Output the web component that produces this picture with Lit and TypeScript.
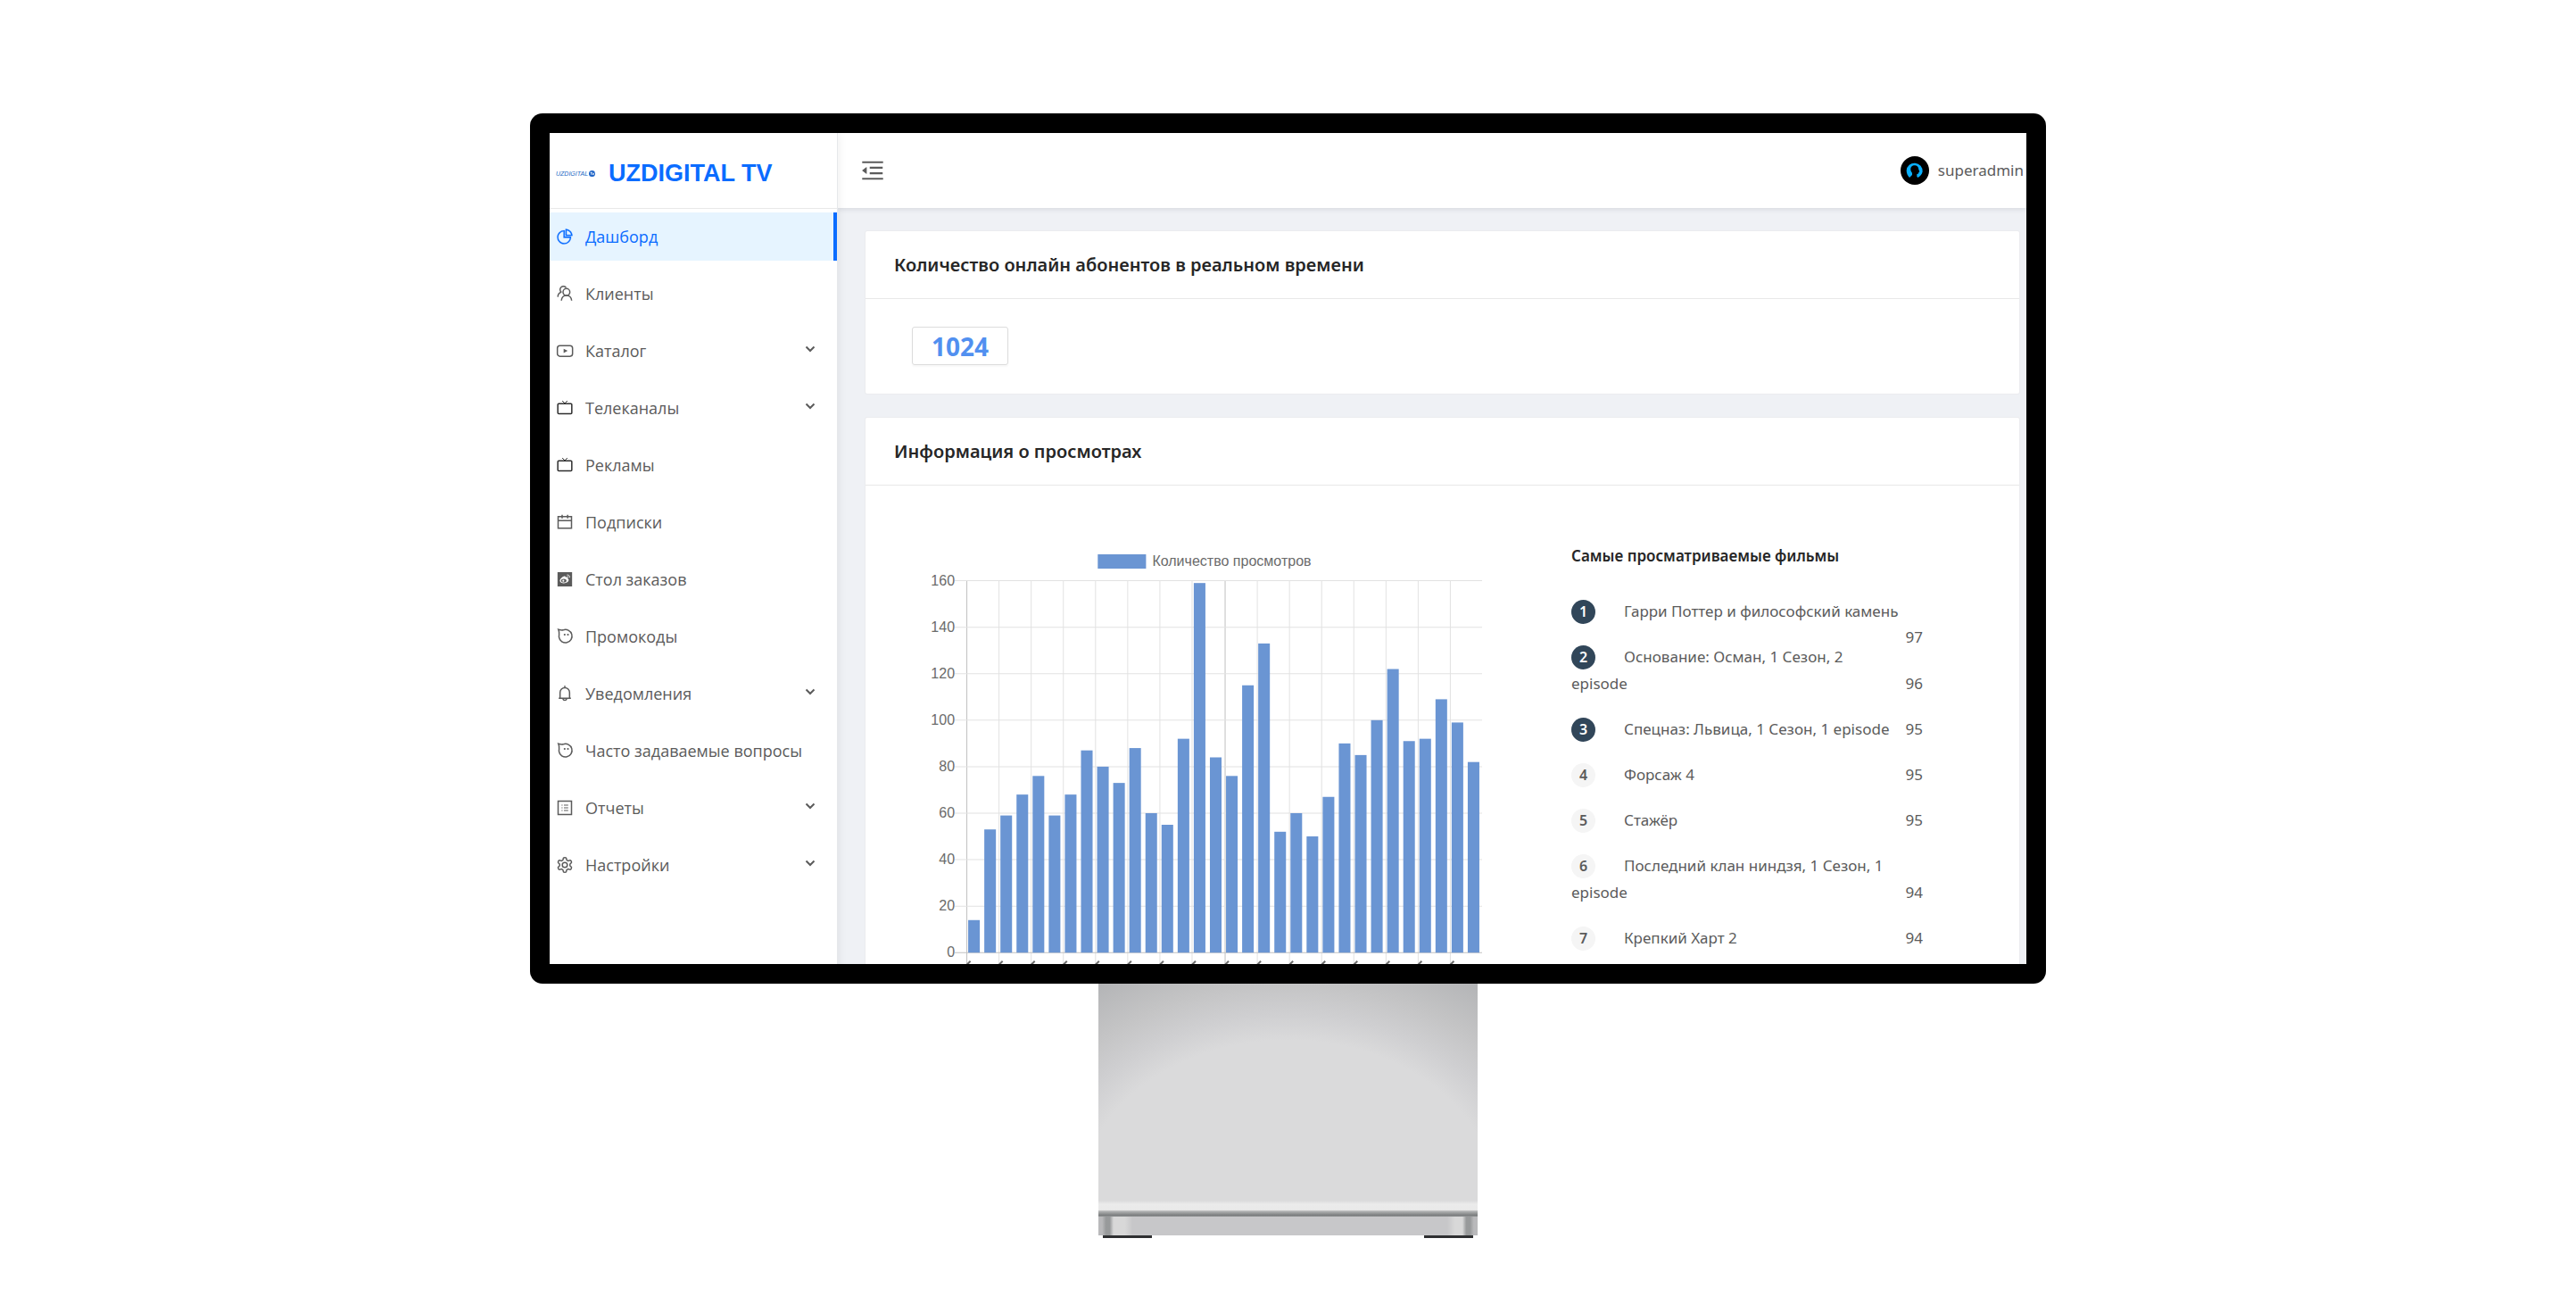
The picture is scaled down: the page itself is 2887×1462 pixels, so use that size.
import { LitElement, html, svg, css } from "lit";
import { customElement, property } from "lit/decorators.js";

const ICONS: Record<string, unknown> = {
  pie: svg`<g transform="scale(0.0234375)"><path fill="currentColor" stroke="currentColor" stroke-width="12" d="M864 518H506V160c0-4.400-3.600-8-8-8h-26a398.460 398.460 0 0 0-282.800 117.100 398.190 398.190 0 0 0-85.700 127.100A397.610 397.610 0 0 0 72 552a398.460 398.460 0 0 0 117.100 282.800c36.700 36.700 79.500 65.600 127.100 85.700A397.610 397.610 0 0 0 472 952a398.460 398.460 0 0 0 282.800-117.100c36.700-36.700 65.600-79.500 85.700-127.100A397.610 397.610 0 0 0 872 552v-26c0-4.400-3.600-8-8-8zM705.700 787.800A331.590 331.590 0 0 1 470.400 884c-88.100-.4-170.900-34.900-233.200-97.200C174.500 724.100 140 640.700 140 552c0-88.700 34.500-172.100 97.200-234.800 54.600-54.600 124.900-87.900 200.800-95.500V586h364.300c-7.700 76.300-41.300 147-96.600 201.800zM952 462.400l-2.600-28.200c-8.500-92.100-49.400-179-115.200-244.600A399.400 399.400 0 0 0 589 74.600L560.700 72c-4.700-.4-8.700 3.200-8.700 7.900V464c0 4.400 3.600 8 8 8l384-1c4.700 0 8.400-4 8-8.600zm-332.200-58.200V147.600a332.240 332.240 0 0 1 166.400 89.800c45.700 45.600 77 103.600 90 166.100l-256.400.7z"/></g>`,
  clients: svg`<circle cx="14.200" cy="9.800" r="4.600"/><path d="M7.400 21.400c.2-4.200 3-7 6.800-7s6.800 2.800 7 7"/><path d="M13.800 4A4.500 4.500 0 1 0 7.200 10"/><path d="M2.600 16.400c.2-3.400 2-5.800 5-6.400"/>`,
  video: svg`<rect x="2" y="5" width="20.400" height="14.400" rx="3.400"/><path fill="currentColor" stroke="none" d="M10.400 9.200v5.800l5.400-2.900z"/>`,
  tv: svg`<g stroke="#2e2e2e"><rect x="2.600" y="6.400" width="18.800" height="13.400" rx="1.200"/><path stroke-width="1.200" d="M8.600 2.400 12 6l3.400-3.600"/></g>`,
  calendar: svg`<path d="M3 4.600h18v15.600H3zM3 10h18M8.400 2v5M15.800 2v5"/>`,
  weibo: svg`<path fill="currentColor" stroke="none" d="M2.200 2.400h19.600v19.200H2.200z"/><path fill="#fff" stroke="none" d="M10.600 8c1.400-.6 2.600-.2 2.400 1.200 2-.6 3.400 0 2.800 1.600 1.600.8 2 2.400.8 4-2.600 3.400-10.600 3.400-11.200-.6-.2-2.400 2.800-5.400 5.200-6.200z"/><ellipse cx="10.600" cy="13.800" rx="3.600" ry="2.500" fill="currentColor" stroke="none"/><circle cx="10" cy="14" r="1.300" fill="#fff" stroke="none"/><path stroke="#fff" stroke-width="1" d="M14.800 6.200c2.600-.6 4.200 1.400 3.600 3.600M15.200 8.200c1-.2 1.600.4 1.400 1.400"/>`,
  face: svg`<path d="M3.400 2.600C5.600 3.400 7.400 4 9.800 3.400a8.800 8.800 0 1 1-5.600 9.600C3.800 9.800 5.600 8 3.400 2.600z"/><g fill="currentColor" stroke="none"><circle cx="11.800" cy="9.600" r="1.300"/><circle cx="16.200" cy="9.600" r="1.300"/></g>`,
  bell: svg`<path d="M5.600 18.200V10.600a6.400 6.400 0 0 1 12.800 0v7.600M3.800 18.400h16.400M9.400 19a2.700 2.700 0 0 0 5.200 0M12 1.400v2.800"/>`,
  report: svg`<path d="M3 3h18v18H3z"/><path stroke-width="1.400" d="M10.800 8.400h5.800M10.800 12h5.800M10.800 15.600h5.800M7.600 8.400h1.400M7.600 12h1.400M7.600 15.600h1.400"/>`,
  gear: svg`<path d="M12.220 2h-.44a2 2 0 0 0-2 2v.18a2 2 0 0 1-1 1.730l-.43.25a2 2 0 0 1-2 0l-.15-.08a2 2 0 0 0-2.730.73l-.22.38a2 2 0 0 0 .73 2.730l.15.1a2 2 0 0 1 1 1.720v.51a2 2 0 0 1-1 1.740l-.15.09a2 2 0 0 0-.73 2.730l.22.38a2 2 0 0 0 2.730.73l.15-.08a2 2 0 0 1 2 0l.43.25a2 2 0 0 1 1 1.730V20a2 2 0 0 0 2 2h.44a2 2 0 0 0 2-2v-.18a2 2 0 0 1 1-1.730l.43-.25a2 2 0 0 1 2 0l.15.08a2 2 0 0 0 2.730-.73l.22-.39a2 2 0 0 0-.73-2.730l-.15-.08a2 2 0 0 1-1-1.740v-.5a2 2 0 0 1 1-1.740l.15-.09a2 2 0 0 0 .73-2.730l-.22-.38a2 2 0 0 0-2.730-.73l-.15.08a2 2 0 0 1-2 0l-.43-.25a2 2 0 0 1-1-1.730V4a2 2 0 0 0-2-2z"/><circle cx="12" cy="12" r="3.400"/>`,
};

interface MenuEntry {
  icon: string;
  label: string;
  group?: boolean;
  active?: boolean;
}

const MENU: MenuEntry[] = [
  { icon: "pie", label: "Дашборд", active: true },
  { icon: "clients", label: "Клиенты" },
  { icon: "video", label: "Каталог", group: true },
  { icon: "tv", label: "Телеканалы", group: true },
  { icon: "tv", label: "Рекламы" },
  { icon: "calendar", label: "Подписки" },
  { icon: "weibo", label: "Стол заказов" },
  { icon: "face", label: "Промокоды" },
  { icon: "bell", label: "Уведомления", group: true },
  { icon: "face", label: "Часто задаваемые вопросы" },
  { icon: "report", label: "Отчеты", group: true },
  { icon: "gear", label: "Настройки", group: true },
];

const VIEWS = [
  14, 53, 59, 68, 76, 59, 68, 87, 80, 73, 88, 60, 55, 92, 159, 84, 76, 115, 133,
  52, 60, 50, 67, 90, 85, 100, 122, 91, 92, 109, 99, 82,
];

interface Film {
  lines: string[];
  views: number;
  spill?: boolean;
}

const FILMS: Film[] = [
  { lines: ["Гарри Поттер и философский камень"], views: 97, spill: true },
  { lines: ["Основание: Осман, 1 Сезон, 2", "episode"], views: 96 },
  { lines: ["Спецназ: Львица, 1 Сезон, 1 episode"], views: 95 },
  { lines: ["Форсаж 4"], views: 95 },
  { lines: ["Стажёр"], views: 95 },
  { lines: ["Последний клан ниндзя, 1 Сезон, 1", "episode"], views: 94 },
  { lines: ["Крепкий Харт 2"], views: 94 },
];

@customElement("side-menu")
class SideMenu extends LitElement {
  static styles = css`
    :host {
      display: block;
    }
    .list {
      list-style: none;
      margin: 0;
      padding: 4px 0 0;
      display: flex;
      flex-direction: column;
      gap: 10px;
    }
    .item {
      box-sizing: border-box;
      width: 100%;
      height: 54px;
      display: flex;
      align-items: center;
      gap: 13px;
      padding: 0 24px 0 7px;
      border: 0;
      border-right: 4px solid transparent;
      background: none;
      color: #5b5b5b;
      font: inherit;
      text-align: left;
      text-decoration: none;
      white-space: nowrap;
      cursor: pointer;
    }
    .active {
      background: #e6f4ff;
      color: #0a6cff;
      border-right-color: #0a6cff;
    }
    .group {
      border-right: 0;
    }
    .icon {
      flex: none;
      width: 20px;
      height: 20px;
      fill: none;
      stroke: currentColor;
      stroke-width: 1.8;
    }
    .chevron {
      flex: none;
      width: 12px;
      height: 8px;
      margin: 0 0 4px auto;
      fill: none;
      stroke: currentColor;
      stroke-width: 2;
    }
  `;

  render() {
    return html`<ul class="list">
      ${MENU.map((m) => {
        const icon = html`<svg class="icon" viewBox="0 0 24 24" aria-hidden="true">${ICONS[m.icon]}</svg>`;
        return html`<li>
          ${m.group
            ? html`<button class="item group" type="button" aria-expanded="false">
                ${icon}<span>${m.label}</span>
                <svg class="chevron" viewBox="0 0 12 8" aria-hidden="true"><path d="M1.500 1.500 6 6l4.500-4.500" /></svg>
              </button>`
            : html`<a class="item ${m.active ? "active" : ""}" href="#">${icon}<span>${m.label}</span></a>`}
        </li>`;
      })}
    </ul>`;
  }
}

@customElement("views-chart")
class ViewsChart extends LitElement {
  @property({ attribute: false }) values: number[] = [];

  static styles = css`
    :host {
      display: block;
    }
    .chart {
      display: block;
      width: 100%;
      overflow: visible;
      font: 16px "Liberation Sans", Arial, sans-serif;
      fill: #6b6b6b;
    }
    .bar {
      fill: #6a95d3;
    }
    .grid {
      stroke: #e2e2e2;
    }
    .axis {
      stroke: #c0c0c0;
    }
    .tip {
      stroke: #6b6b6b;
      stroke-width: 2;
    }
    .num {
      text-anchor: end;
    }
  `;

  render() {
    const left = 43;
    const right = 620;
    const top = 42;
    const bottom = 458;
    const step = (right - left) / this.values.length;
    const unit = (bottom - top) / 160;
    const ticks = [0, 20, 40, 60, 80, 100, 120, 140, 160];
    const columns = this.values.map((_, i) => i).filter((i) => i % 2 === 0);
    return html`<svg class="chart" viewBox="0 0 624 480" role="img" aria-label="Количество просмотров">
      <rect class="bar" x="190" y="13" width="54" height="16" />
      <text x="251" y="26">Количество просмотров</text>
      ${columns.map((i) => {
        const x = Math.round(left + i * step) + 0.5;
        return svg`<line class=${i === 0 || i === 16 ? "axis" : "grid"} x1=${x} x2=${x} y1=${top} y2=${bottom + 14}></line>
          <line class="tip" x1=${x} x2=${x + 4} y1=${bottom + 14} y2=${bottom + 10}></line>`;
      })}
      ${ticks.map((t) => {
        const y = Math.round(bottom - t * unit) + 0.5;
        return svg`<line class=${t === 0 ? "axis" : "grid"} x1=${left - 13} x2=${right} y1=${y} y2=${y}></line>
          <text class="num" x=${left - 13} y=${y + 5}>${t}</text>`;
      })}
      ${this.values.map(
        (v, i) => svg`<rect class="bar" x=${left + i * step + 2} y=${bottom + 0.5 - v * unit} width="13" height=${v * unit}></rect>`,
      )}
    </svg>`;
  }
}

@customElement("film-list")
class FilmList extends LitElement {
  static styles = css`
    :host {
      display: block;
      color: #5b5b5b;
      font-family: "Noto Sans", "Open Sans", sans-serif;
      font-size: 17px;
      line-height: 30px;
      white-space: nowrap;
    }
    .title {
      margin: 0 0 32px;
      font-size: 17px;
      font-weight: 600;
      color: #262626;
    }
    .list {
      list-style: none;
      margin: 0;
      padding: 0;
      display: flex;
      flex-direction: column;
      gap: 21px;
    }
    .film {
      display: flex;
      justify-content: space-between;
      align-items: flex-end;
    }
    .name {
      min-width: 0;
    }
    .line {
      display: flex;
      align-items: center;
      height: 30px;
    }
    .rank {
      flex: none;
      width: 27px;
      height: 27px;
      margin-right: 32px;
      border-radius: 50%;
      background: #f5f5f5;
      font-size: 16px;
      font-weight: 600;
      line-height: 27px;
      text-align: center;
    }
    .top {
      background: #314659;
      color: #fff;
    }
    .views {
      flex: none;
      height: 30px;
    }
    .spill {
      margin-bottom: -29px;
    }
  `;

  render() {
    return html`<h3 class="title">Самые просматриваемые фильмы</h3>
      <ol class="list">
        ${FILMS.map(
          (f, i) => html`<li class="film">
            <div class="name">
              ${f.lines.map(
                (l, n) => html`<div class="line">
                  ${n === 0 ? html`<span class="rank ${i < 3 ? "top" : ""}">${i + 1}</span>` : ""}${l}
                </div>`,
              )}
            </div>
            <span class="views ${f.spill ? "spill" : ""}">${f.views}</span>
          </li>`,
        )}
      </ol>`;
  }
}

@customElement("app-root")
class AppRoot extends LitElement {
  static styles = css`
    :host {
      display: block;
      min-height: 100vh;
      box-sizing: border-box;
      padding-top: 127px;
      background: #fff;
      font-family: "Open Sans", "Noto Sans", sans-serif;
      font-size: 18px;
      color: #5b5b5b;
    }
    .stage {
      display: grid;
      grid-template-columns: 594fr 1699fr 594fr;
    }
    .device {
      grid-column: 2;
      display: flex;
      flex-direction: column;
      align-items: center;
    }
    .bezel {
      box-sizing: border-box;
      width: 100%;
      padding: 22px;
      border-radius: 14px;
      background: #000;
    }
    .screen {
      aspect-ratio: 1655 / 931;
      overflow: hidden;
      display: grid;
      grid-template-columns: 322px minmax(0, 1fr);
      background: #eff1f5;
    }
    .sidebar {
      position: relative;
      z-index: 2;
      background: #fff;
      box-shadow: 1px 0 0 #e6e8eb, 2px 0 10px rgba(0, 0, 0, 0.07);
    }
    .brand {
      box-sizing: border-box;
      height: 85px;
      display: flex;
      align-items: center;
      gap: 15px;
      padding: 6px 0 0 7px;
      border-bottom: 1px solid #e8e8e8;
      color: #0a6cff;
      text-decoration: none;
      white-space: nowrap;
      font-family: "Liberation Sans", Arial, sans-serif;
    }
    .mini {
      display: flex;
      align-items: center;
      gap: 1px;
      color: #2368c4;
      font-size: 7px;
      font-style: italic;
    }
    .tvmark {
      width: 7px;
      height: 7px;
    }
    .name {
      font-size: 27px;
      font-weight: 700;
    }
    .main {
      min-width: 0;
      display: flex;
      flex-direction: column;
    }
    .topbar {
      flex: none;
      box-sizing: border-box;
      height: 84px;
      display: flex;
      align-items: center;
      justify-content: space-between;
      padding: 0 3px 1px 25px;
      background: #fff;
      box-shadow: 0 1px 6px rgba(0, 21, 41, 0.12);
    }
    .fold {
      display: flex;
      padding: 0;
      border: 0;
      background: none;
      color: #5b5b5b;
      cursor: pointer;
    }
    .foldicon {
      width: 30px;
      height: 30px;
      fill: currentColor;
    }
    .user {
      display: flex;
      align-items: center;
      gap: 10px;
      padding: 0;
      border: 0;
      background: none;
      color: inherit;
      font-family: "Noto Sans", "Open Sans", sans-serif;
      font-size: 17px;
      cursor: pointer;
    }
    .avatar {
      width: 32px;
      height: 32px;
    }
    .content {
      display: flex;
      flex-direction: column;
      gap: 27px;
      padding: 26px 8px 0 32px;
    }
    .card {
      flex: none;
      background: #fff;
      border-radius: 2px;
      box-shadow: 0 0 0 1px #ebecef;
    }
    .cardtitle {
      box-sizing: border-box;
      height: 76px;
      margin: 0;
      padding: 0 32px;
      border-bottom: 1px solid #e8e8e8;
      font-family: "Noto Sans", "Open Sans", sans-serif;
      font-size: 20px;
      font-weight: 600;
      line-height: 76px;
      color: #262626;
      white-space: nowrap;
    }
    .online {
      display: flex;
      padding: 31px 52px 32px;
    }
    .count {
      box-sizing: border-box;
      height: 43px;
      padding: 0 21px;
      border: 1px solid #dcdcdc;
      border-radius: 3px;
      box-shadow: 0 2px 2px rgba(0, 0, 0, 0.03);
      font-size: 28px;
      font-weight: 700;
      line-height: 43px;
      color: #5190f0;
    }
    .stats {
      display: grid;
      grid-template-columns: minmax(0, 1fr) 394px;
      column-gap: 96px;
      padding: 64px 108px 0 70px;
    }
    .stand {
      width: 25%;
      display: flex;
      flex-direction: column;
    }
    .neck {
      height: 243px;
      background: radial-gradient(ellipse 74% 100% at 50% 100%, #dadadb 0 74%, #cfcfd1 86%, #c4c4c5 100%, #b3b4b6 121%);
    }
    .lip {
      height: 18px;
      background: linear-gradient(#dadadb 0, #ebebeb 22%, #e9e9e9 58%, #b4b5b5 66%, #7a7d7e 92%, #9b9c9d 100%);
    }
    .base {
      height: 21px;
      background: linear-gradient(90deg, #b9b9bb 0 1%, #989a9b 2% 3%, #d8d8d8 4% 7%, #c7c7c9 9% 92%, #d8d8d8 94% 96%, #989a9b 97% 98%, #b9b9bb 99%);
    }
    .feet {
      display: flex;
      justify-content: space-between;
      padding: 0 5px;
    }
    .foot {
      width: 55px;
      height: 3px;
      background: #2f3032;
    }
  `;

  render() {
    return html`<div class="stage">
      <div class="device">
        <div class="bezel">
          <div class="screen">
            <nav class="sidebar">
              <a class="brand" href="#">
                <span class="mini">UZDIGITAL
                  <svg class="tvmark" viewBox="0 0 14 14" aria-hidden="true">
                    <circle cx="7" cy="7" r="7" fill="#1b62c6" />
                    <path d="M3 4.500h5M5.500 4.500v5.500M8 6l1.500 4L12 5" fill="none" stroke="#fff" stroke-width="1.500" />
                  </svg>
                </span>
                <span class="name">UZDIGITAL TV</span>
              </a>
              <side-menu></side-menu>
            </nav>
            <div class="main">
              <header class="topbar">
                <button class="fold" type="button" aria-label="Меню">
                  <svg class="foldicon" viewBox="0 0 1024 1024" aria-hidden="true">
                    <path d="M408 442h480c4.400 0 8-3.600 8-8v-56c0-4.400-3.600-8-8-8H408c-4.400 0-8 3.600-8 8v56c0 4.400 3.600 8 8 8zm-8 204c0 4.400 3.600 8 8 8h480c4.400 0 8-3.600 8-8v-56c0-4.400-3.600-8-8-8H408c-4.400 0-8 3.600-8 8v56zm504-486H120c-4.400 0-8 3.600-8 8v56c0 4.400 3.600 8 8 8h784c4.400 0 8-3.600 8-8v-56c0-4.400-3.600-8-8-8zm0 632H120c-4.400 0-8 3.600-8 8v56c0 4.400 3.600 8 8 8h784c4.400 0 8-3.600 8-8v-56c0-4.400-3.600-8-8-8zM115.400 518.900L271.700 642c5.800 4.600 14.400.5 14.400-6.900V388.900c0-7.400-8.500-11.500-14.400-6.900L115.400 505.100a8.740 8.740 0 0 0 0 13.800z" />
                  </svg>
                </button>
                <button class="user" type="button">
                  <svg class="avatar" viewBox="0 0 96 96" aria-hidden="true">
                    <circle cx="48" cy="48" r="48" />
                    <path fill="#0ab0ff" d="M20 48a27 27 0 1 1 54 4c-2 10-8 16-16 20l-3-4v-8c5 0 6-2 6-6l3-2-3-7c0-9-6-14-13-14-9 0-15 6-14 14 0 5 3 8 5 11v7l-9 9c-6-6-10-14-10-24z" />
                  </svg>
                  <span>superadmin</span>
                </button>
              </header>
              <main class="content">
                <section class="card">
                  <h2 class="cardtitle">Количество онлайн абонентов в реальном времени</h2>
                  <div class="online"><span class="count">1024</span></div>
                </section>
                <section class="card">
                  <h2 class="cardtitle">Информация о просмотрах</h2>
                  <div class="stats">
                    <views-chart .values=${VIEWS}></views-chart>
                    <film-list></film-list>
                  </div>
                </section>
              </main>
            </div>
          </div>
        </div>
        <div class="stand" aria-hidden="true">
          <div class="neck"></div>
          <div class="lip"></div>
          <div class="base"></div>
          <div class="feet"><span class="foot"></span><span class="foot"></span></div>
        </div>
      </div>
    </div>`;
  }
}
